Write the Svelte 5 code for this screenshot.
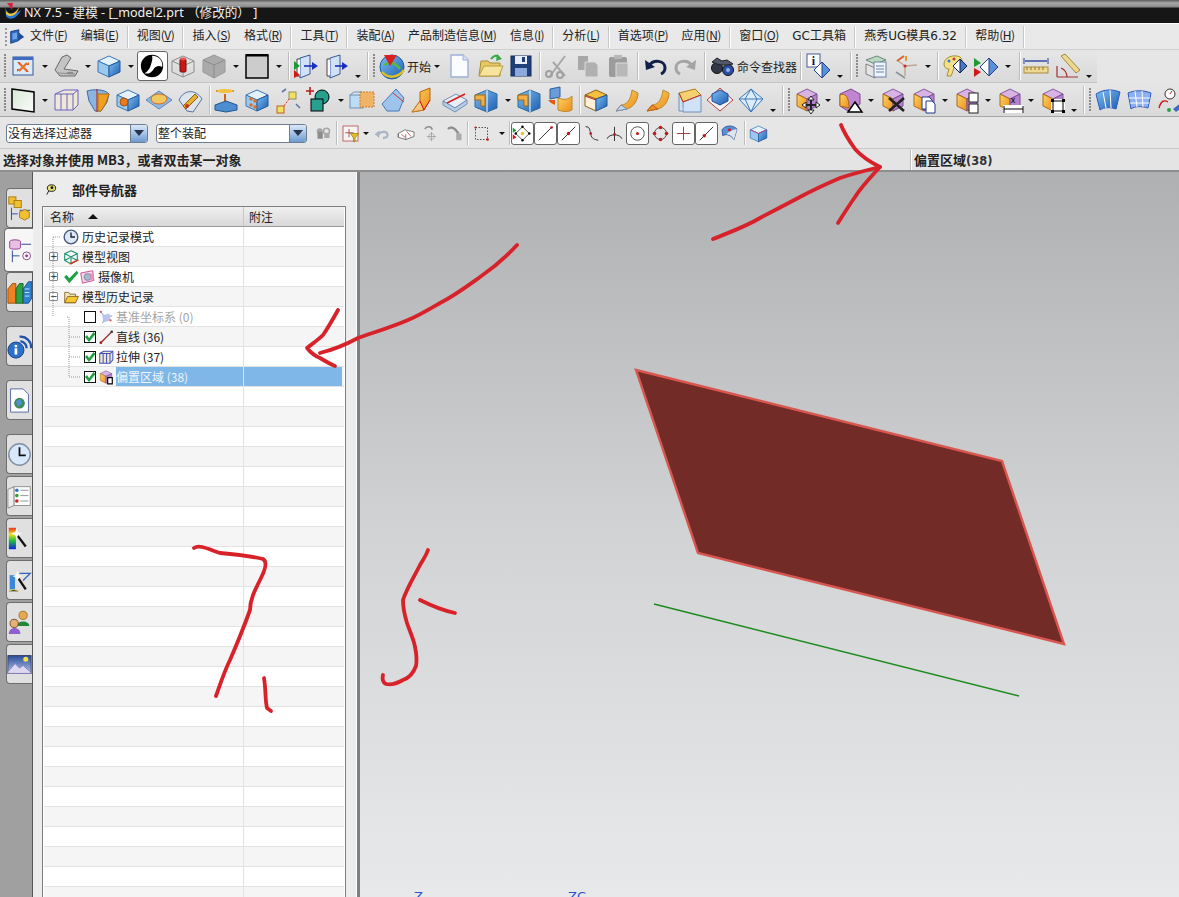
<script>
  // toolbars are laid out by slot: '|' separator, ':' grip, '>' drop arrow, '_' low drop arrow,
  // '~' text label, '*' pressed button, '^' narrow slot
  const cube = (over = '') =>
    `<path d="M14 3 24 8 14 13 4 8Z" fill="#d8b4e4" stroke="#8a5a9c"/><path d="M4 8 14 13V25L4 20Z" fill="url(#gO)" stroke="#a86a1c"/><path d="M14 13 24 8V20L14 25Z" fill="#b583cc" stroke="#7c4a92"/>` + over;
  const blue = (over = '') =>
    `<path d="M14 4 25 9 14 14 3 9Z" fill="#e4f2fc" stroke="#3a78b8"/><path d="M3 9 14 14V25L3 20Z" fill="#9cc8ec" stroke="#3a78b8"/><path d="M14 14 25 9V20L14 25Z" fill="url(#gB)" stroke="#20589c"/>` + over;
  const wire = (c = '#5a6ac0') =>
    `<path d="M14 4 25 9V20L14 25 3 20V9ZM3 9 14 14 25 9M14 14V25" fill="none" stroke="${c}"/>`;
  const surf = (a, b) =>
    `<path d="M19 4 25 7C25 14 21 21 14 23L3 25 8 19C14 19 18 13 19 4Z" fill="url(#gO)" stroke="#b88a30"/><path d="M3 25 8 19 14 23Z" fill="${a}" stroke="${b}"/>`;

  const icons = {
    win: `<rect x="4" y="5" width="20" height="18" fill="#dceaf8" stroke="#34589c"/><rect x="4" y="5" width="20" height="3" fill="#3f6cc0"/><path d="M10 11 18 19M18 11 10 19" stroke="#e8742a" stroke-width="2.4"/><path d="M8 10h3v3zM20 10v3h-3zM8 20v-3h3zM20 20h-3v-3z" fill="#d85a1c"/>`,
    shade: `<path d="M3 18 10 5 15 3 19 6 12 17 26 19 23 24H8Z" fill="#c4c4c4" stroke="#6a6a6a"/><path d="M6 21 23 22" stroke="#8c8c8c"/><ellipse cx="18" cy="21" rx="3.4" ry="1.2" fill="#8c8c8c"/>`,
    cube: blue(),
    press: `<circle cx="14" cy="14" r="12" fill="#000"/><path d="M14 3C22 3 26 9 25 15 22 13 18 14 16 17 14 20 12 23 6 22 10 19 12 16 13 12 14 9 15 6 14 3Z" fill="#fff"/>`,
    redcyl: wire('#8c8c8c') + `<rect x="11" y="7" width="6" height="13" rx="1" fill="#c81818" stroke="#701010"/><ellipse cx="14" cy="7" rx="3" ry="1.4" fill="#e85050"/>`,
    gray: `<path d="M14 3 25 8V20L14 26 3 20V8Z" fill="#aaa" stroke="#999"/><path d="M3 8 14 13 25 8M14 13V26" fill="none" stroke="#8c8c8c"/>`,
    rect: `<rect x="3" y="3" width="22" height="23" fill="#ccc" stroke="#000" stroke-width="1.5"/><rect x="3" y="2" width="22" height="2.5" fill="#000"/>`,
    flag: `<path d="M9 6 19 3V22L9 26Z" fill="#cfe2f6" stroke="#38589a"/><path d="M9 7H6V24H9" fill="#fff" stroke="#444"/><path d="M3 9 9 14 3 18Z" fill="#1a9a30"/><path d="M3 18 9 23 3 26Z" fill="#d01818"/><path d="M13 14H24" stroke="#1a2fc0" stroke-width="1.6"/><path d="M21 10 27 14 21 18Z" fill="#1a2fc0"/>`,
    door: `<path d="M8 6 18 3V22L8 26Z" fill="#cfe2f6" stroke="#38589a"/><path d="M8 7H5V24H8" fill="#fff" stroke="#444"/><path d="M13 14H23" stroke="#1a2fc0" stroke-width="1.6"/><path d="M20 10 26 14 20 18Z" fill="#1a2fc0"/>`,
    globe: `<circle cx="14" cy="15" r="12" fill="url(#gB)" stroke="#1a5aa0"/><path d="M4 20C10 27 20 26 26 18" stroke="#e0c020" stroke-width="2.4" fill="none"/><path d="M6 13C12 9 18 11 22 17" stroke="#58b848" stroke-width="2.4" fill="none"/><path d="M6 3 19 3 12 14Z" fill="#d82020"/>`,
    doc: `<path d="M6 3H18L23 8V25H6Z" fill="#fbfcff" stroke="#9cb0d8" stroke-width="1.4"/><path d="M18 3V8H23" fill="#dce4f4" stroke="#9cb0d8"/>`,
    open: `<path d="M3 24 5 9H12L14 11H24V24Z" fill="#e8c860" stroke="#a88c30"/><path d="M3 24 8 14H27L23 24Z" fill="#f6e49c" stroke="#b89c40"/><path d="M15 7C18 3 21 3 23 5" stroke="#38a848" stroke-width="2" fill="none"/><path d="M21 2 26 7 20 9Z" fill="#38a848"/>`,
    save: `<rect x="4" y="4" width="20" height="20" fill="#20407c" stroke="#102858"/><rect x="8" y="4" width="12" height="8" fill="#e8eefc"/><rect x="15" y="5" width="3" height="5" fill="#20407c"/><rect x="8" y="16" width="12" height="8" fill="#8ca8dc"/>`,
    cut: `<path d="M7 24 22 4M22 24 10 10" stroke="#a8a8a8" stroke-width="2" fill="none"/><circle cx="6" cy="22" r="3" fill="none" stroke="#a0a0a0" stroke-width="2"/><circle cx="17" cy="23" r="3" fill="none" stroke="#a0a0a0" stroke-width="2"/>`,
    copy: `<path d="M4 4H14V18H4Z" fill="#a8a8a8"/><path d="M11 10H21L24 13V25H11Z" fill="#b0b0b0" stroke="#dcdcdc"/>`,
    paste: `<rect x="4" y="5" width="18" height="20" rx="2" fill="#9c9c9c"/><rect x="9" y="3" width="8" height="4" fill="#b8b8b8"/><path d="M11 11H23V25H11Z" fill="#b8b8b8" stroke="#dcdcdc"/>`,
    undo: `<path d="M8 14C12 7 24 8 24 16 24 19 22 21 20 22" fill="none" stroke="#102048" stroke-width="3"/><path d="M4 8 5 18 14 15Z" fill="#102048"/>`,
    redo: `<path d="M20 14C16 7 4 8 4 16 4 19 6 21 8 22" fill="none" stroke="#a4a4a4" stroke-width="3"/><path d="M24 8 23 18 14 15Z" fill="#a4a4a4"/>`,
    bino: `<circle cx="9" cy="16" r="5.5" fill="#303848" stroke="#111"/><circle cx="20" cy="18" r="5.5" fill="#2c4ea8" stroke="#111"/><path d="M4 10 9 6 14 9 19 8 25 12 20 13 14 13 9 12Z" fill="#50586a" stroke="#222"/><circle cx="20" cy="18" r="2" fill="#8fb0f0"/>`,
    info: `<rect x="3" y="2" width="13" height="13" fill="#fff" stroke="#4a5a9c"/><text x="9.5" y="13" font-size="12" font-weight="700" font-family="Liberation Serif" text-anchor="middle" fill="#101040">i</text><path d="M18 10 26 18 18 26 10 18Z" fill="#5a90d8" stroke="#20408c"/><path d="M18 10V26L10 18Z" fill="#fff" stroke="#20408c"/>`,
    layers: `<path d="M5 8 16 4 25 8 14 12Z" fill="#b8d8c0" stroke="#6a8a7c"/><path d="M5 12 14 16V26L5 22Z" fill="#e4e4e4" stroke="#808080"/><rect x="13" y="10" width="12" height="15" fill="#eef4fc" stroke="#6a80a8"/><path d="M15 14H23M15 17H23M15 20H23" stroke="#6a80a8"/>`,
    axis: `<path d="M13 14V24M13 14 5 8M13 14 25 13" stroke="#c0a890" stroke-width="1.4" fill="none"/><path d="M12 4 5 9" stroke="#e0602c" stroke-width="2"/><circle cx="13" cy="14" r="1.6" fill="#c83030"/><path d="M4 20 13 26" stroke="#8c9498" stroke-width="1.6"/><path d="M14 4V9" stroke="#d8a030" stroke-width="2"/>`,
    palette: `<path d="M4 12C4 5 14 2 20 5 24 8 22 13 17 13 13 14 14 18 11 24H7L9 17C6 17 4 15 4 12Z" fill="#f4e088" stroke="#a89030"/><circle cx="9" cy="9" r="1.5" fill="#3078d0"/><circle cx="14" cy="7" r="1.5" fill="#d03030"/><path d="M20 7 27 14 20 21 13 14Z" fill="#4878c8" stroke="#102050"/><path d="M20 7V21L13 14Z" fill="#fff" stroke="#102050"/>`,
    play: `<path d="M3 6 10 11 3 15Z" fill="#1a9a30"/><path d="M3 16 10 20 3 25Z" fill="#d01818"/><path d="M18 6 27 15 18 24 9 15Z" fill="#5a90d8" stroke="#20408c"/><path d="M18 6V24L9 15Z" fill="#fff" stroke="#20408c"/>`,
    ruler: `<rect x="2" y="15" width="24" height="6" fill="#ecd890" stroke="#a88c40"/><path d="M5 15v3M9 15v3M13 15v3M17 15v3M21 15v3" stroke="#907030"/><path d="M3 9H25" stroke="#2840a0" stroke-width="1.4"/><path d="M2 6V12M26 6V12" stroke="#2840a0"/>`,
    prot: `<path d="M4 25H25M4 25V14M14 25A10 10 0 0 0 8 16" stroke="#a03030" fill="none" stroke-width="1.2"/><path d="M8 4 12 2 27 18 23 21Z" fill="#ecd890" stroke="#a08840"/>`,

    plane: `<path d="M3 3 25 6V26L3 23Z" fill="url(#gP)" stroke="#000" stroke-width="1.5"/>`,
    extr: `<path d="M3 8 12 4H26V19L21 24H3Z" fill="#efe8d8" stroke="#6a60c0"/><path d="M3 8H21V24M21 8 26 4M9 8V24M15 8V24" fill="none" stroke="#6a60c0"/>`,
    rev: `<path d="M4 5C10 3 22 3 26 8L24 16 18 25H12L6 15Z" fill="#8cb4e0" stroke="#3a6ca8"/><path d="M14 3V26" stroke="#b01818"/><path d="M15 8H26L23 17 18 25H15Z" fill="#f0a020" stroke="#b07010"/>`,
    hole: blue(`<circle cx="10" cy="16" r="4" fill="#e87a20" stroke="#a85010"/>`),
    pad: `<path d="M14 5 27 14 14 23 1 14Z" fill="#8cb8e4" stroke="#5a88bc"/><ellipse cx="14" cy="13" rx="8" ry="5" fill="#f0c860" stroke="#d86820"/>`,
    edit: `<path d="M3 14C8 3 20 3 26 13L17 26 11 25Z" fill="#dce4ec" stroke="#5a70a0"/><path d="M7 20 19 8 22 11 10 23Z" fill="#e8b030" stroke="#906010"/><circle cx="11" cy="20" r="2" fill="#d03020"/>`,
    boss: `<path d="M4 5 22 5" stroke="#e89028" stroke-width="2"/><ellipse cx="13" cy="5" rx="8" ry="2" fill="#f0c040"/><path d="M13 8V15" stroke="#d06020" stroke-width="2"/><path d="M3 19 14 15 25 19V24L14 26 3 24Z" fill="#4c8cd0" stroke="#20588c"/>`,
    grid: blue(`<g fill="#d8742a"><circle cx="8" cy="13" r="1.8"/><circle cx="12" cy="15" r="1.8"/><circle cx="8" cy="19" r="1.8"/><circle cx="12" cy="21" r="1.8"/></g>`),
    pts: `<rect x="3" y="20" width="7" height="7" fill="#f4e060" stroke="#c06020"/><rect x="15" y="6" width="7" height="7" fill="#f4e060" stroke="#909060"/><path d="M10 20 15 13" stroke="#d03020" stroke-dasharray="2 1.4"/><path d="M8 6 12 3M22 18 26 22" stroke="#6078a8" stroke-width="1.6"/>`,
    csg: `<circle cx="17" cy="11" r="7" fill="#28a090" stroke="#000"/><rect x="6" y="13" width="12" height="12" fill="#28a090" stroke="#000"/><path d="M1 5H9M5 1V9" stroke="#c01818" stroke-width="1.6"/>`,
    box2: `<rect x="2" y="9" width="13" height="13" fill="#bcdcf4" stroke="#6a90b8"/><rect x="12" y="6" width="14" height="15" fill="#f0b468" stroke="#d07a28" stroke-dasharray="2 1"/><path d="M2 9 6 6H14" fill="none" stroke="#6a90b8"/>`,
    wedge: `<path d="M3 18 17 3 25 12 20 25 8 25Z" fill="#9cc4ec" stroke="#4878b8"/><path d="M14 7 25 16" stroke="#d83030"/>`,
    fold: `<path d="M2 26 10 15V6L20 2V14L14 24Z" fill="url(#gO)" stroke="#b86010"/><path d="M2 26 10 15 14 24Z" fill="#f4c880" stroke="#c07820"/><path d="M10 15 14 24 20 14" stroke="#d81818" fill="none"/>`,
    slab: `<path d="M2 15 15 8 26 14 14 22Z" fill="#e8eef6" stroke="#7090b8"/><path d="M2 15V19L14 26 26 18V14L14 22Z" fill="#b8cce4" stroke="#7090b8"/><path d="M6 17 24 8" stroke="#d81818" stroke-width="1.4"/>`,
    ubl: `<path d="M3 9 15 4 25 8V22L15 26 3 21Z" fill="url(#gB)" stroke="#30689c"/><path d="M3 9H13V20H9V14H3Z" fill="#f0b048" stroke="#a86810"/><path d="M15 4V26" stroke="#fff"/>`,
    sheet: `<path d="M4 3 14 1V11L4 13Z" fill="#6a9ad8" stroke="#30609c"/><path d="M12 12C18 14 22 14 26 10V24C22 26 18 26 12 24Z" fill="url(#gO)" stroke="#b88a30"/><path d="M2 14H9V19L5 17Z" fill="#e05a18"/>`,
    trim: `<path d="M3 9 14 4 25 9 14 13Z" fill="#f4c040" stroke="#906010"/><path d="M3 9 14 13V25L3 20Z" fill="#fff0d8" stroke="#906010"/><path d="M14 13 25 9V20L14 25Z" fill="url(#gB)" stroke="#20589c"/><path d="M3 10 14 14" stroke="#d02020"/>`,
    s1: surf('#c8d8ec', '#7090b0'),
    s2: surf('#f08c2c', '#c06010'),
    flange: `<path d="M4 7 20 3 26 9 8 16Z" fill="#f4d070" stroke="#a88010"/><path d="M8 16 26 9V26H8Z" fill="#cfe2f6" stroke="#7090b8"/><path d="M4 7V25H8" fill="#cfe2f6" stroke="#7090b8"/><path d="M4 7 8 16 26 9" stroke="#d03020" fill="none"/>`,
    pyr: `<path d="M14 2 27 14 14 25 1 14Z" fill="#f4f4f8" stroke="#b04040"/><path d="M14 4 22 8V15L14 19 6 15V8Z" fill="url(#gB)" stroke="#204ca0"/>`,
    sph: `<path d="M14 3 26 13 14 26 2 13Z" fill="#dcecfa" stroke="#3a78b8"/><path d="M2 13H26M14 3 8 13 14 26 20 13Z" fill="none" stroke="#3a78b8"/>`,

    move: cube(`<path d="M18 12V26M11 19H25" stroke="#222" stroke-width="2"/><path d="M18 10 21 14H15ZM18 28 15 24H21ZM9 19 13 16V22ZM27 19 23 22V16Z" fill="#fff" stroke="#222"/>`),
    off: `<path d="M4 8 15 3 24 8V18L12 25 4 20Z" fill="#c084d0" stroke="#7c4a92"/><path d="M4 9C9 7 13 10 13 22L4 20Z" fill="url(#gO)" stroke="#a86a1c"/><path d="M19 16 26 26H12Z" fill="#fff" stroke="#000" stroke-width="1.5"/>`,
    del: cube(`<path d="M10 12 25 25M25 12 10 25" stroke="#222" stroke-width="2.6"/>`),
    cp: cube(`<path d="M12 11H19L22 14V23H12Z" fill="#fff" stroke="#1c3c8c"/><path d="M16 15H22L25 18V27H16Z" fill="#fff" stroke="#1c3c8c"/>`),
    split: cube(`<rect x="16" y="7" width="9" height="9" fill="#fff" stroke="#222"/><rect x="16" y="18" width="9" height="9" fill="#fff" stroke="#222"/>`),
    dim: cube(`<rect x="7" y="19" width="21" height="8" fill="#fff"/><path d="M8 20V27M27 20V27M8 23H27" stroke="#000"/><text x="17" y="17" font-size="9" text-anchor="middle" font-family="Liberation Sans" fill="#000">x</text>`),
    scale: cube(`<rect x="12" y="13" width="14" height="14" fill="#fff"/><rect x="14" y="15" width="10" height="10" fill="none" stroke="#000"/><path d="M12 13h3v3h-3zM23 13h3v3h-3zM12 24h3v3h-3zM23 24h3v3h-3z" fill="#000"/>`),
    sf1: `<path d="M2 8C10 3 18 3 26 6L22 23C16 21 10 21 6 24Z" fill="url(#gB)" stroke="#3058c0"/><path d="M9 6 12 22M16 4 17 22" stroke="#fff"/>`,
    sf2: `<path d="M3 7C10 4 18 4 26 7L23 22C16 20 10 20 6 23Z" fill="#8cb0f0" stroke="#3058c0"/><path d="M4 12 25 12M5 17 24 17M10 5 12 21M17 5 18 21" stroke="#fff"/>`,
    analyze: `<circle cx="14" cy="8" r="5" fill="#fff" stroke="#333"/><path d="M14 8 16 5" stroke="#d01818"/><path d="M3 22C5 14 9 14 12 16" stroke="#d01818" fill="none" stroke-width="1.4"/><path d="M17 23 26 16 27 21 20 26Z" fill="#3c6cc8"/><circle cx="13" cy="24" r="2" fill="#28a048"/>`,

    lock: `<circle cx="9" cy="11" r="4" fill="#a4a4a4"/><circle cx="18" cy="11" r="4" fill="none" stroke="#a4a4a4" stroke-width="2"/><rect x="6" y="12" width="7" height="9" fill="#8c8c8c"/><rect x="15" y="13" width="7" height="7" fill="#a8a8a8"/>`,
    filter: `<rect x="4" y="4" width="20" height="20" fill="#f4f4f4" stroke="#b84040"/><path d="M12 8V19M7 13H18" stroke="#a02020"/><path d="M14 14H25L20 20V25H18V20Z" fill="#e8c020" stroke="#908010"/>`,
    arrowg: `<path d="M10 15C14 10 23 11 22 17 21 20 18 20 16 20" fill="none" stroke="#a8b4c4" stroke-width="3"/><path d="M5 15 11 10V20Z" fill="#a8b4c4"/>`,
    faceg: `<path d="M3 14 12 9 24 12V18L13 22 3 19Z" fill="#fff" stroke="#555"/><path d="M14 11 20 18M7 15 12 19" stroke="#c03030"/><path d="M3 14V19M13 15V22" stroke="#555"/>`,
    gcross: `<path d="M14 12V24M8 18H20" stroke="#a8a8a8" stroke-width="1.4"/><circle cx="14" cy="18" r="4" fill="none" stroke="#a8a8a8"/><path d="M5 8C8 4 14 4 15 9" fill="none" stroke="#909090" stroke-width="2"/>`,
    gwave: `<path d="M4 8C7 4 12 7 14 9L18 14" fill="none" stroke="#8c8c8c" stroke-width="3"/><rect x="15" y="14" width="7" height="9" fill="#aaa"/>`,
    marq: `<rect x="6" y="6" width="16" height="16" fill="none" stroke="#222" stroke-dasharray="2 2"/><circle cx="6" cy="6" r="1.5" fill="#c01818"/><circle cx="22" cy="22" r="1.8" fill="#c01818"/>`,
    snap: `<path d="M14 5 23 14 14 23 5 14Z" fill="#fff" stroke="#222"/><circle cx="14" cy="14" r="2.4" fill="#e8c820"/><path d="M1 6 6 10 1 13Z" fill="#1a9a30"/><path d="M1 15 6 19 1 22Z" fill="#d01818"/><circle cx="14" cy="5" r="1.6"/><circle cx="23" cy="14" r="1.6"/><circle cx="14" cy="23" r="1.6"/><circle cx="5" cy="14" r="1.6"/>`,
    lineEnd: `<path d="M5 23 23 5" stroke="#222" stroke-width="1.2"/><circle cx="22" cy="6" r="1.8" fill="#c01818"/>`,
    lineMid: `<path d="M5 23 23 5" stroke="#222" stroke-width="1.2"/><circle cx="14" cy="14" r="2.2" fill="#c01818"/>`,
    curve: `<path d="M6 5C12 4 12 11 13 15 14 21 18 22 23 23" fill="none" stroke="#222" stroke-width="1.2"/><circle cx="13" cy="14" r="1.8" fill="#c01818"/>`,
    inter: `<path d="M14 5V24M4 21C7 14 21 14 24 21" fill="none" stroke="#222" stroke-width="1.2"/><circle cx="14" cy="15" r="1.8" fill="#c01818"/>`,
    center: `<circle cx="14" cy="14" r="9" fill="none" stroke="#222"/><circle cx="14" cy="14" r="2" fill="#c01818"/>`,
    quad: `<circle cx="14" cy="14" r="8" fill="none" stroke="#222"/><g fill="#c01818"><circle cx="14" cy="6" r="2.4"/><circle cx="14" cy="22" r="2.4"/><circle cx="6" cy="14" r="2.4"/><circle cx="22" cy="14" r="2.4"/></g>`,
    plus: `<path d="M14 5V23M5 14H23" stroke="#8c3030" stroke-width="1.2"/>`,
    nearest: `<path d="M5 23 23 5" stroke="#222" stroke-width="1.2"/><circle cx="11" cy="17" r="2.2" fill="#c01818"/>`,
    surfp: `<path d="M4 9C8 3 18 2 24 8L20 22C14 14 8 15 5 17Z" fill="#5a90d8" stroke="#20408c"/><path d="M10 15C14 15 18 18 20 22L24 8C20 9 14 10 10 15Z" fill="#dce4ec"/><circle cx="14" cy="9" r="2" fill="#d01818"/>`,
    tint: blue(`<path d="M3 9 14 14 25 9" fill="none" stroke="#e03090"/>`),

    clock: `<circle cx="14" cy="14" r="12" fill="#dce8f8" stroke="#4a5a7c" stroke-width="2.4"/><path d="M14 6V14H21" stroke="#222" stroke-width="2.4" fill="none"/>`,
    wcube: `<path d="M14 3 25 8V20L14 26 3 20V8ZM3 8 14 14 25 8M14 14V26M3 20 14 14 25 20" fill="none" stroke="#108c6c" stroke-width="1.8"/><path d="M12 26 27 19" stroke="#d83020" stroke-width="2.6"/>`,
    check: `<path d="M2 14 6 10 11 16 24 3 27 7 11 25Z" fill="#20a040"/>`,
    cam: `<path d="M3 7 24 3 26 20 6 25Z" fill="#f4d4e8" stroke="#d04890" stroke-width="1.6"/><circle cx="15" cy="14" r="6" fill="#a8b8cc" stroke="#606880"/><path d="M20 7 26 10V18L20 20Z" fill="#e890c0"/>`,
    folder: `<path d="M3 24V6H10L12 9H22V24Z" fill="#f4e8c0" stroke="#806020" stroke-width="1.5"/><path d="M3 24 8 13H27L22 24Z" fill="#f8c830" stroke="#806020" stroke-width="1.5"/>`,
    datum: `<path d="M5 5 12 14 25 12M12 14 8 25" stroke="#8090c0" stroke-width="1.6" fill="none"/><path d="M7 11 20 8 22 20 10 23Z" fill="#b8c4ec"/><circle cx="5" cy="5" r="2" fill="#d06060"/><circle cx="22" cy="20" r="2" fill="#d06060"/>`,
    line: `<path d="M5 24 24 5" stroke="#a03030" stroke-width="2.4"/><circle cx="5" cy="24" r="2.4" fill="#a02020"/><circle cx="24" cy="5" r="2.4" fill="#404040"/>`,
    extr2: `<path d="M3 8 10 4H26V19L21 25H3Z" fill="#f0e8c8" stroke="#4050c0" stroke-width="1.8"/><path d="M3 8H21V25M21 8 26 4M9 8V25M15 8V25" fill="none" stroke="#4050c0" stroke-width="1.8"/>`,
    offs: cube(`<path d="M17 15H25V26H17Z" fill="#fff" stroke="#000" stroke-width="2"/>`),
    pin: `<ellipse cx="14" cy="11" rx="9" ry="7" fill="#e8e078" stroke="#111" stroke-width="2"/><path d="M8 17 4 25" stroke="#111" stroke-width="2"/><circle cx="15" cy="10" r="3" fill="#111"/>`,

    tabA: `<rect x="2" y="1" width="8" height="8" fill="#f0c030" stroke="#a87810"/><rect x="8" y="5" width="8" height="8" fill="#f0c030" stroke="#a87810"/><path d="M5 13V27M5 20H12M14 16H26" stroke="#2040a0"/><path d="M14 18 20 15 25 18V24L20 27 14 24Z" fill="#f0c030" stroke="#a87810"/>`,
    tabB: `<ellipse cx="9" cy="4" rx="6" ry="2" fill="#e8c0e4" stroke="#8c3888"/><path d="M3 4V11C3 13 15 13 15 11V4" fill="#e8c0e4" stroke="#8c3888"/><path d="M6 14V27M6 20H14M16 7H27" stroke="#1a3c90"/><circle cx="22" cy="20" r="4.4" fill="none" stroke="#8c3888"/><circle cx="22" cy="20" r="1.6" fill="#8c3888"/>`,
    tabC: `<path d="M1 10 6 4H10V26H1Z" fill="#f08020" stroke="#905010"/><path d="M10 10 14 4H18V26H10Z" fill="#30a040" stroke="#106020"/><path d="M18 10 24 2H28V20L24 26H18Z" fill="#3080d0" stroke="#104880"/><path d="M20 10H25M20 14H25M20 18H25" stroke="#dcecfa"/>`,
    tabD: `<path d="M14 3A12 12 0 0 1 27 16M15 8A8 8 0 0 1 22 16" stroke="#2050b0" stroke-width="2.6" fill="none"/><circle cx="10" cy="18" r="9" fill="#2c70c8" stroke="#103880"/><rect x="8.5" y="16" width="3" height="7" fill="#fff"/><circle cx="10" cy="13.5" r="1.6" fill="#fff"/>`,
    tabE: `<path d="M4 1H18L24 7V27H4Z" fill="#fff" stroke="#5060a0"/><circle cx="14" cy="17" r="6" fill="#3c8c58"/><path d="M10 15 15 12 17 18 12 21Z" fill="#5090d8"/>`,
    tabF: `<circle cx="14" cy="14" r="12" fill="#d8e8fa" stroke="#8090a4" stroke-width="1.6"/><path d="M14 6V15H21" stroke="#111" stroke-width="2" fill="none"/>`,
    tabG: `<path d="M1 6 8 3V24L1 27Z" fill="#eee" stroke="#888"/><rect x="8" y="3" width="18" height="21" fill="#fff" stroke="#888"/><circle cx="11" cy="7" r="2" fill="#3070d0"/><circle cx="11" cy="13" r="2" fill="#30a030"/><circle cx="11" cy="19" r="2" fill="#d02020"/><path d="M15 7H24M15 13H24M15 19H24" stroke="#888"/>`,
    tabH: `<rect x="2" y="2" width="8" height="24" fill="url(#gR)"/><path d="M12 11 21 23" stroke="#111" stroke-width="2.6"/><path d="M11 2 12 7 17 8 12 10 11 14 9 10 4 8 9 7Z" fill="#fff"/>`,
    tabI: `<path d="M3 8H9V24H3Z" fill="#3c88d8"/><path d="M2 26C5 24 10 24 13 26" stroke="#e0d020"/><path d="M13 12 21 24" stroke="#111" stroke-width="2.6"/><path d="M14 6H26L18 14" fill="none" stroke="#3060c0" stroke-width="1.4"/><path d="M12 3 13 8 17 9 13 11 12 14 10 11 6 9 10 8Z" fill="#fff"/>`,
    tabJ: `<circle cx="18" cy="6" r="4.6" fill="#e8a850" stroke="#a07030"/><path d="M11 18C11 11 25 11 25 18Z" fill="#208838"/><circle cx="8" cy="15" r="4.6" fill="#e8b078" stroke="#704820"/><path d="M2 27C2 18 15 18 15 27Z" fill="#9060d0"/>`,
    tabK: `<rect x="1" y="4" width="26" height="20" fill="url(#gS)" stroke="#303860"/><circle cx="21" cy="8" r="2.8" fill="#f8e040"/><path d="M1 22 9 13 14 18 18 15 27 23V24H1Z" fill="#dcd8f0" stroke="#8878b8"/>`
  };

  const row1 = [':', 'win', '>', 'shade', '>', 'cube', '>', '*press', 'redcyl', 'gray', '>', 'rect', '>', '|', 'flag', 'door', '_', '|', ':', 'globe', '~开始', '>', 'doc', 'open', 'save', '|', 'cut', 'copy', 'paste', '|', 'undo', 'redo', '|', 'bino', '~命令查找器', '|', 'info', '__', '|', ':', 'layers', 'axis', '>', '|', 'palette', 'play', '>>', '|', 'ruler', 'prot', '_'];
  const row2 = [':', 'plane', '>', 'extr', 'rev', 'hole', 'pad', 'edit', '|', 'boss', 'grid', 'pts', 'csg', '>', 'box2', 'wedge', 'fold', 'slab', 'ubl', '>', 'ubl', 'sheet', '|', 'trim', 's1', 's2', 'flange', 'pyr', 'sph', '_', '|', ':', 'move', '>', 'off', '>', 'del', 'cp', '>', 'split', '>', 'dim', '>', 'scale', '_', '|', ':', 'sf1', 'sf2', 'analyze'];
  const row3 = ['lock', '|', 'filter', '>', 'arrowg', 'faceg', 'gcross', '^gwave', '|', 'marq', '>>', '|', '*snap', '*lineEnd', '*lineMid', '^curve', '^inter', '*center', '^quad', '*plus', '*nearest', '^surfp', '||', 'tint'];

  const menu = [['文件', 'F'], ['编辑', 'E'], '|', ['视图', 'V'], '|', ['插入', 'S'], ['格式', 'R'], '|', ['工具', 'T'], '|', ['装配', 'A'], ['产品制造信息', 'M'], ['信息', 'I'], '|', ['分析', 'L'], '|', ['首选项', 'P'], ['应用', 'N'], '|', ['窗口', 'O'], ['GC工具箱'], '|', ['燕秀UG模具6.32'], '|', ['帮助', 'H'], '|'];

  const tabs2 = ['tabF', 'tabG', 'tabH', 'tabI', 'tabJ', 'tabK'];

  const rows = [
    { cls: 'top', exp: '', ico: ['clock'], text: '历史记录模式' },
    { cls: 'top', exp: '+', ico: ['wcube'], text: '模型视图' },
    { cls: 'top', exp: '+', ico: ['check', 'cam'], text: '摄像机' },
    { cls: 'top', exp: '-', ico: ['folder'], text: '模型历史记录' },
    { cls: 'leaf off', box: false, ico: ['datum'], text: '基准坐标系', num: '(0)' },
    { cls: 'leaf', box: true, ico: ['line'], text: '直线', num: '(36)' },
    { cls: 'leaf', box: true, ico: ['extr2'], text: '拉伸', num: '(37)' },
    { cls: 'leaf sel', box: true, ico: ['offs'], text: '偏置区域', num: '(38)' }
  ];
  const blanks = Array.from({ length: 26 });
</script>

{#snippet ico(k, size = 28)}
  <svg class="ic" width={size} height={size} viewBox="0 0 28 28">{@html icons[k]}</svg>
{/snippet}

{#snippet tools(list)}
  {#each list as it}
    {#if it === '|'}
      <span class="sep"></span>
    {:else if it === '||'}
      <span class="sep wide"></span>
    {:else if it === ':'}
      <span class="grip"></span>
    {:else if it === '>'}
      <span class="drop"><i></i></span>
    {:else if it === '>>'}
      <span class="drop wide"><i></i></span>
    {:else if it === '_'}
      <span class="drop low"><i></i></span>
    {:else if it === '__'}
      <span class="drop low wider"><i></i></span>
    {:else if it[0] === '~'}
      <span class="label">{it.slice(1)}</span>
    {:else if it[0] === '*'}
      <span class="tool on">{@render ico(it.slice(1), 22)}</span>
    {:else if it[0] === '^'}
      <span class="tool tight">{@render ico(it.slice(1), 22)}</span>
    {:else}
      <span class="tool">{@render ico(it, 28)}</span>
    {/if}
  {/each}
{/snippet}

<svg class="defs" width="0" height="0">
  <defs>
    <linearGradient id="gB" x1="0" y1="0" x2="1" y2="1"><stop offset="0" stop-color="#7fc0f2" /><stop offset="1" stop-color="#1c5cb0" /></linearGradient>
    <linearGradient id="gO" x1="0" y1="0" x2="1" y2="1"><stop offset="0" stop-color="#fbd860" /><stop offset="1" stop-color="#ee8a1c" /></linearGradient>
    <linearGradient id="gP" x1="0" y1="0" x2="1" y2="1"><stop offset="0" stop-color="#d8e8d4" /><stop offset="1" stop-color="#fbfbfb" /></linearGradient>
    <linearGradient id="gR" x1="0" y1="0" x2="0" y2="1"><stop offset="0" stop-color="#e83020" /><stop offset=".3" stop-color="#f0e020" /><stop offset=".6" stop-color="#20c040" /><stop offset="1" stop-color="#1020e0" /></linearGradient>
    <linearGradient id="gS" x1="0" y1="0" x2="0" y2="1"><stop offset="0" stop-color="#2c4c98" /><stop offset="1" stop-color="#b0c8ec" /></linearGradient>
  </defs>
</svg>

<div class="app">
  <header class="title">
    <svg class="logo" width="20" height="20" viewBox="0 0 20 20">
      <path d="M2 3C3 12 8 15 18 8 14 17 6 19 3 14Z" fill="#2c78d8" />
      <path d="M3 9C7 14 12 12 16 5 15 12 8 17 3 12Z" fill="#f0c838" />
      <path d="M4 1H10L9 8Z" fill="#d8203c" />
    </svg>
    <span>NX 7.5 - 建模 - [_model2.prt （修改的） ]</span>
  </header>

  <nav class="menubar">
    <span class="menu-grip"></span>
    <svg class="menu-ico" width="18" height="18" viewBox="0 0 20 20">
      <path d="M3 4 12 2V14L3 17Z" fill="#2c68c0" stroke="#143c80" />
      <path d="M12 5 18 10 12 14Z" fill="#1c4c9c" />
      <path d="M5 6 10 5V12L5 13Z" fill="#6ca4e8" />
    </svg>
    {#each menu as m}
      {#if m === '|'}
        <span class="msep"></span>
      {:else}
        <span class="mitem">{m[0]}{#if m[1]}<small>(<u>{m[1]}</u>)</small>{/if}</span>
      {/if}
    {/each}
  </nav>

  <div class="toolrow short">{@render tools(row1)}</div>
  <div class="toolrow">{@render tools(row2)}</div>

  <div class="filterrow">
    <div class="combo first"><span>没有选择过滤器</span><b></b></div>
    <div class="combo second"><span>整个装配</span><b></b></div>
    <div class="ftools">{@render tools(row3)}</div>
  </div>

  <div class="status">
    <span class="cue">选择对象并使用 MB3，或者双击某一对象</span>
    <span class="sel-name">偏置区域<em>(38)</em></span>
  </div>

  <main class="main">
    <aside class="rail">
      <div class="tab flush">{@render ico('tabA', 25)}</div>
      <div class="tab active">{@render ico('tabB', 25)}</div>
      <div class="tab">{@render ico('tabC', 25)}</div>
      <div class="tab gap">{@render ico('tabD', 25)}</div>
      <div class="tab gap">{@render ico('tabE', 25)}</div>
      <div class="tab gap">{@render ico(tabs2[0], 25)}</div>
      {#each tabs2.slice(1) as t}
        <div class="tab">{@render ico(t, 25)}</div>
      {/each}
    </aside>

    <section class="nav">
      <div class="nav-title">{@render ico('pin', 13)}<strong>部件导航器</strong></div>
      <div class="list">
        <div class="list-head">
          <div class="c1">名称<i class="sort"></i></div>
          <div class="c2">附注</div>
        </div>
        {#each rows as r, i}
          <div class="row" class:odd={i % 2 === 1}>
            <div class="c1 {r.cls}">
              {#if r.cls === 'top'}
                <span class="exp" class:none={!r.exp}>{r.exp === '+' ? '+' : r.exp === '-' ? '−' : ''}</span>
              {:else}
                <span class="box">{#if r.box}<svg width="12" height="12" viewBox="0 0 12 12"><path d="M1 6 3 4 5 7 9.5 1 11.5 3 5 11Z" fill="#20a040" /></svg>{/if}</span>
              {/if}
              {#each r.ico as k}{@render ico(k, 16)}{/each}
              <span class="txt">{r.text}{#if r.num}&nbsp;{r.num}{/if}</span>
            </div>
            <div class="c2" class:selc={r.cls.includes('sel')}></div>
          </div>
        {/each}
        {#each blanks as _, i}
          <div class="row" class:odd={(i + 8) % 2 === 1}><div class="c1"></div><div class="c2"></div></div>
        {/each}
        <svg class="treelines" width="60" height="160" viewBox="0 0 60 160">
          <path d="M10 10V90M10 10H18M24 90H26V150H38M26 110H38M26 130H38" fill="none" stroke="#999" stroke-dasharray="1 1" />
        </svg>
      </div>
    </section>

    <section class="viewport">
      <svg class="model" viewBox="360 172 819 725">
        <polygon points="636,370 1002,461 1064,644 698,553" fill="#722b27" stroke="#d8564e" stroke-width="2.4" />
        <line x1="654" y1="604" x2="1019" y2="696" stroke="#1b8a1b" stroke-width="1.4" />
        <text x="414" y="901" class="ax">Z</text>
        <text x="568" y="901" class="ax">ZC</text>
      </svg>
    </section>
  </main>

  <svg class="ink" viewBox="0 0 1179 897">
    <path d="M713 239C730 232 745 227 760 218 775 210 785 205 800 197 815 189 826 184 840 178 855 173 868 170 880 167" />
    <path d="M841 125C845 135 850 142 855 149 862 157 870 162 880 167 870 178 862 186 855 197 848 207 843 215 838 223" />
    <path d="M517 245C505 258 493 268 480 277 466 287 454 296 440 303 428 310 418 316 408 320 392 327 375 332 358 338 345 345 332 350 320 353" />
    <path d="M338 310C333 319 328 328 323 335 318 340 312 344 307 348 311 353 315 356 320 358 325 361 330 364 335 366" />
    <path d="M194 548C200 544 210 550 220 553 232 554 250 556 263 559 268 562 264 572 261 578 254 592 250 600 250 610 245 624 240 637 230 660 224 672 220 685 216 696" />
    <path d="M264 678C266 690 265 700 267 708L271 711" />
    <path d="M428 550C426 556 424 558 420 565 414 577 407 588 403 600 403 610 405 616 407 623 410 632 414 640 415 647 417 656 417 660 416 666 413 674 409 678 403 680 396 684 390 685 386 684 382 682 382 679 383 675" />
    <path d="M420 600C430 605 440 610 455 613" />
  </svg>
</div>

<style>
  :global(body) {
    margin: 0;
    background: #e4e4e4;
    font-family: "DejaVu Sans", "Noto Sans CJK SC", sans-serif;
    font-size: 12px;
    color: #222;
  }
  .defs { position: absolute; }
  .app {
    position: relative;
    width: 1179px;
    height: 897px;
    overflow: hidden;
    display: flex;
    flex-direction: column;
    background: #e6e6e6;
  }
  .ic { display: block; flex: none; }

  /* title */
  .title {
    height: 23px;
    flex: none;
    box-sizing: border-box;
    background: linear-gradient(#5c5c5c 0, #a8a8a8 3px, #8a8a8a 7px, #161616 8px, #161616 100%);
    color: #f2f2f2;
    display: flex;
    align-items: flex-end;
    padding: 0 0 1px 3px;
    font-family: "Noto Sans", "Noto Sans CJK SC", sans-serif;
    font-size: 12.6px;
    line-height: 19px;
    white-space: pre;
  }
  .logo { margin-right: 1px; }

  /* menu */
  .menubar {
    height: 27px;
    flex: none;
    display: flex;
    align-items: center;
    background: #e9e9e9;
    border-top: 1px solid #fff;
    box-sizing: border-box;
    border-bottom: 1px solid #cfcfcf;
    font-family: "DejaVu Sans", "Noto Sans CJK SC", sans-serif;
    white-space: nowrap;
  }
  .menu-grip { width: 2px; height: 18px; margin-left: 5px; border-left: 2px dotted #999; box-sizing: border-box; }
  .menu-ico { margin-left: 1px; margin-right: -2.75px; }
  .mitem { padding: 0 6.75px 2px; line-height: 16px; }
  .mitem small { font-family: "Noto Sans CJK SC", sans-serif; font-size: 12px; letter-spacing: -.5px; }
  .msep { width: 1px; height: 22px; background: #c8c8c8; border-right: 1px solid #fff; margin: 0 1.4px; }

  /* toolbars */
  .toolrow {
    height: 33px;
    flex: none;
    display: flex;
    align-items: center;
    box-sizing: border-box;
    margin-bottom: 1px;
    background: linear-gradient(#e6e6e6, #d9d9d9);
    border-bottom: 1px solid #a6a6a6;
    white-space: nowrap;
    overflow: hidden;
  }
  .toolrow.short { width: 1097px; border-bottom-color: #c4c4c4; }
  .tool {
    width: 31px;
    height: 28px;
    flex: none;
    display: flex;
    align-items: center;
    justify-content: center;
    box-sizing: border-box;
  }
  .tool.on {
    background: #fff;
    border: 1px solid #666;
    border-radius: 3px;
  }
  .toolrow .tool.on { width: 31px; height: 30px; }
  .toolrow .tool.on :global(svg) { width: 26px; height: 26px; }
  .drop {
    width: 12px;
    height: 26px;
    flex: none;
    display: flex;
    align-items: center;
    justify-content: center;
  }
  .drop.wide { width: 15px; }
  .drop.wider { width: 14px; }
  .drop i { border: 3px solid transparent; border-top: 3.5px solid #111; border-bottom: 0; width: 0; height: 0; }
  .drop.low { align-items: flex-end; padding-bottom: 1px; box-sizing: border-box; }
  .sep {
    width: 5px;
    height: 28px;
    flex: none;
    box-sizing: border-box;
    border-right: 1px solid #fff;
    box-shadow: inset -1px 0 0 #bdbdbd;
  }
  .grip {
    width: 7.5px;
    height: 24px;
    flex: none;
    box-sizing: border-box;
    padding-left: 4px;
    background: radial-gradient(circle at 1px 1px, #8a8a8a 1px, transparent 1.2px) 4px 0 / 3px 3px repeat-y;
  }
  .label { font-family: "Noto Sans CJK SC", sans-serif; font-size: 12px; flex: none; }

  /* filter row */
  .filterrow {
    height: 31px;
    flex: none;
    display: flex;
    align-items: center;
    padding-left: 6px;
    box-sizing: border-box;
    background: #e6e6e6;
    border-bottom: 1px solid #c8c8c8;
  }
  .combo {
    height: 19px;
    box-sizing: border-box;
    display: flex;
    justify-content: space-between;
    background: #fff;
    border: 1px solid #6d7d94;
    border-radius: 3px;
    font-family: "Noto Sans CJK SC", sans-serif;
    line-height: 16px;
    padding-left: 1px;
    flex: none;
  }
  .combo b {
    width: 16px;
    background: linear-gradient(#dbe9f8, #6d9bd1);
    border-left: 1px solid #6d7d94;
    border-radius: 0 2px 2px 0;
    position: relative;
  }
  .combo b::after {
    content: "";
    position: absolute;
    left: 3px;
    top: 5px;
    border: 5px solid transparent;
    border-top: 6px solid #27344c;
    border-bottom: 0;
  }
  .first { width: 142px; margin-right: 8px; }
  .second { width: 151px; margin-right: 4px; }
  .ftools { display: flex; align-items: center; }
  .ftools .tool { width: 25px; height: 24px; }
  .ftools .tool :global(svg) { width: 21px; height: 21px; }
  .ftools .tool.on, .ftools .tool.tight { width: 23px; height: 23px; }
  .ftools .sep { height: 24px; width: 2px; }
  .ftools .sep.wide { width: 5px; }
  .ftools .drop { width: 6px; }
  .ftools .drop.wide { width: 15px; }

  /* status */
  .status {
    height: 21px;
    flex: none;
    display: flex;
    align-items: center;
    font-weight: 700;
    font-size: 13px;
    background: #e4e4e4;
    border-bottom: 2px solid #8e8e8e;
    box-sizing: content-box;
  }
  .cue { flex: 1; padding-left: 3px; font-family: "Noto Sans CJK SC", sans-serif; }
  .sel-name { width: 265px; padding-left: 2px; height: 20px; line-height: 20px; border-left: 1px solid #fff; box-shadow: -1px 0 0 #bbb; font-family: "Noto Sans CJK SC", sans-serif; }
  .sel-name em { font-style: normal; font-weight: 700; color: #333; font-family: "DejaVu Sans", sans-serif; font-size: 11.5px; }

  .main { flex: 1; display: flex; min-height: 0; }

  /* rail */
  .rail {
    width: 33px;
    flex: none;
    box-sizing: border-box;
    padding-top: 16px;
    background: #a0a0a0;
    border-right: 1px solid #555;
    display: flex;
    flex-direction: column;
    align-items: flex-end;
  }
  .tab {
    width: 26px;
    height: 40px;
    margin-bottom: 2px;
    box-sizing: border-box;
    background: #e0e0e0;
    border: 1px solid #6e6e6e;
    border-right: 0;
    border-radius: 4px 0 0 4px;
    display: flex;
    align-items: center;
    justify-content: center;
  }
  .tab.flush { margin-bottom: 0; }
  .tab.active { width: 29px; height: 44px; margin-bottom: 0; background: #f6f6f6; margin-right: -1px; position: relative; }
  .tab.gap { margin-top: 12px; }

  /* navigator */
  .nav {
    width: 327px;
    flex: none;
    box-sizing: border-box;
    background: #ececec;
    padding: 0 11px 0 9px;
    border-right: 3px solid #7f7f7f;
    box-shadow: inset -1px 0 0 #fff;
    font-family: "Noto Sans CJK SC", "DejaVu Sans", sans-serif;
  }
  .nav-title { height: 34px; display: flex; align-items: center; gap: 14px; padding-left: 3px; box-sizing: border-box; }
  .nav-title strong { font-size: 13px; }
  .list { position: relative; border: 1px solid #7f7f7f; border-bottom: 0; background: #fff; width: 304px; box-sizing: border-box; padding: 0 1px; }
  .list-head { display: flex; height: 20px; background: linear-gradient(#f0f0f0, #d8d8d8); border-bottom: 1px solid #9a9a9a; box-sizing: border-box; line-height: 20px; }
  .list-head .c1 { padding-left: 6px; gap: 14px; border-right: 1px solid #c8c8c8; }
  .list-head .c2 { padding-left: 5px; }
  .sort { border: 5px solid transparent; border-bottom: 5px solid #111; border-top: 0; }
  .c1 { width: 200px; flex: none; display: flex; align-items: center; box-sizing: border-box; }
  .c2 { flex: 1; }
  .row { display: flex; height: 20px; box-sizing: border-box; border-bottom: 1px solid #e2e2e2; background: #fff; }
  .row.odd { background: #f5f5f5; }
  .row .c1 { border-right: 1px solid #e2e2e2; }
  .top { padding-left: 5px; }
  .exp {
    width: 9px;
    height: 9px;
    box-sizing: border-box;
    border: 1px solid #8a8a8a;
    margin-right: 5px;
    font: 9px/7px "DejaVu Sans", sans-serif;
    text-align: center;
    background: #fff;
    flex: none;
    border-radius: 1px;
  }
  .exp.none { visibility: hidden; }
  .top .txt { margin-left: 3px; }
  .leaf { padding-left: 40px; }
  .box {
    width: 12px;
    height: 12px;
    border: 1px solid #111;
    box-sizing: border-box;
    background: #fff;
    flex: none;
    margin-right: 2px;
    display: flex;
    align-items: center;
    justify-content: center;
  }
  .box svg { flex: none; }
  .leaf .txt { margin-left: 2px; align-self: stretch; line-height: 19px; flex: 1; }
  .off .txt { color: #a4a4a4; }
  .sel .txt { background: #7fb8e8; color: #eef4fb; }
  .selc { background: #7fb8e8; margin-right: 2px; }
  .treelines { position: absolute; left: 0; top: 20px; pointer-events: none; }

  /* viewport */
  .viewport {
    flex: 1;
    position: relative;
    background: linear-gradient(#aeb0b2, #d2d3d5 50%, #e8e9eb);
  }
  .model { position: absolute; inset: 0; width: 100%; height: 100%; }
  .ax { fill: #2a50d0; font: 13px "DejaVu Sans", sans-serif; }

  .ink {
    position: absolute;
    inset: 0;
    width: 100%;
    height: 100%;
    pointer-events: none;
  }
  .ink path { fill: none; stroke: #d8222a; stroke-width: 3.8; stroke-linecap: round; stroke-linejoin: round; }
</style>
